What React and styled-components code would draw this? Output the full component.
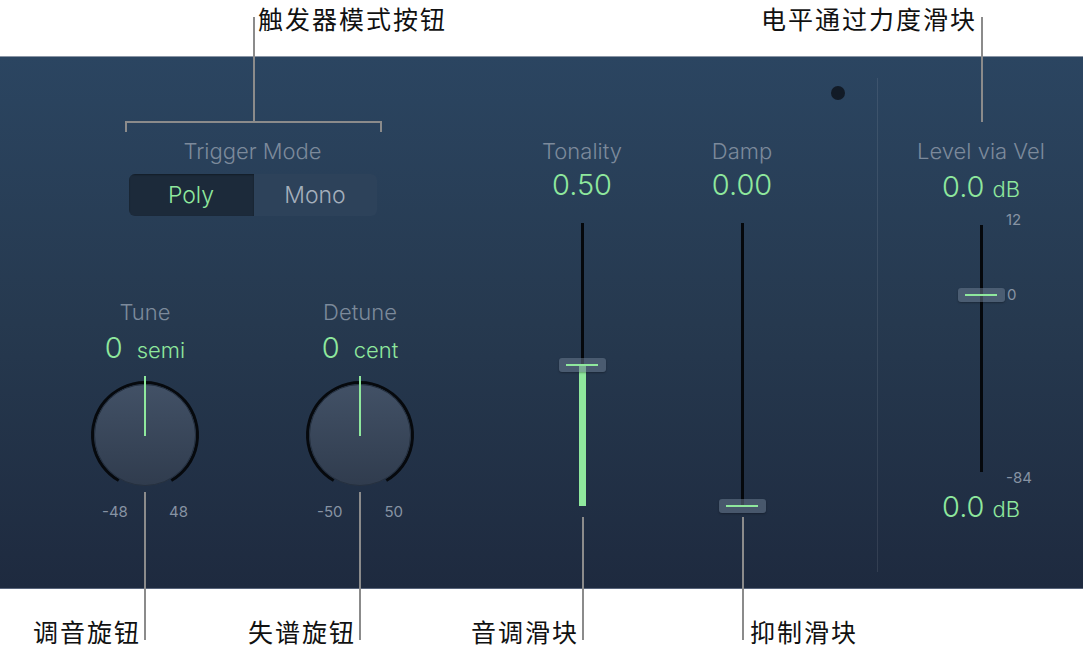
import styled, { createGlobalStyle } from "styled-components";

const GlobalStyle = createGlobalStyle`
  html, body {
    margin: 0;
    padding: 0;
    background: #ffffff;
  }
  body {
    font-family: Inter, "Noto Sans", sans-serif;
  }
`;

const GREEN = "#8fe89d";
const LABEL = "#7c8a9b";

const Page = styled.div`
  position: relative;
  width: 1083px;
  height: 654px;
  display: flex;
  flex-direction: column;
  overflow: hidden;
  background: #fff;
`;

const Strip = styled.div`
  height: ${(p) => p.$h}px;
  flex: none;
`;

const Panel = styled.div`
  height: 533px;
  box-sizing: border-box;
  flex: none;
  display: flex;
  align-items: flex-start;
  border-top: 1px solid #8a95a5;
  border-bottom: 1px solid #58647a;
  background: linear-gradient(180deg, #2b4561 0%, #26394f 50%, #1e2a3f 100%);
`;

const LeftGroup = styled.div`
  width: 365px;
  margin-left: 70px;
  padding-top: 81px;
  display: flex;
  flex-direction: column;
  align-items: center;
`;

const Label = styled.div`
  font-size: 22px;
  font-weight: 300;
  line-height: 26px;
  color: ${LABEL};
  white-space: nowrap;
  text-align: center;
`;

const Segmented = styled.div`
  margin-top: 10px;
  display: flex;
  height: 42px;
  border-radius: 6px;
  background: #2d425a;
  overflow: hidden;
`;

const Segment = styled.div`
  width: ${(p) => p.$w}px;
  display: flex;
  align-items: center;
  justify-content: center;
  font-size: 23px;
  font-weight: 300;
  color: ${(p) => (p.$active ? GREEN : "#a4afbc")};
  background: ${(p) => (p.$active ? "#1c2a3a" : "transparent")};
  box-shadow: ${(p) => (p.$active ? "inset 0 1px 2px rgba(0,0,0,0.35)" : "none")};
`;

const KnobRow = styled.div`
  margin-top: 83px;
  display: flex;
  gap: 65px;
`;

const KnobCol = styled.div`
  width: 150px;
  display: flex;
  flex-direction: column;
  align-items: center;
`;

const Value = styled.div`
  margin-top: ${(p) => p.$mt ?? 6}px;
  font-size: 29px;
  font-weight: 300;
  line-height: 34px;
  color: ${GREEN};
  white-space: nowrap;
  text-align: center;
`;

const Unit = styled.span`
  font-size: 22px;
  margin-left: ${(p) => p.$gap}px;
`;

const KnobSvg = styled.svg`
  margin-top: 7px;
  display: block;
`;

const Scale = styled.div`
  margin-top: 11px;
  width: 86px;
  display: flex;
  justify-content: space-between;
  font-size: 15px;
  line-height: 18px;
  color: #8793a3;
`;

const SliderCol = styled.div`
  width: 120px;
  margin-left: ${(p) => p.$ml}px;
  padding-top: 81px;
  display: flex;
  flex-direction: column;
  align-items: center;
`;

const TrackArea = styled.div`
  position: relative;
  margin-top: ${(p) => p.$mt}px;
  width: 60px;
  height: ${(p) => p.$h}px;
`;

const Track = styled.div`
  position: absolute;
  left: 50%;
  top: 0;
  width: 3px;
  margin-left: -1.5px;
  height: ${(p) => p.$h}px;
  background: #05080c;
`;

const Fill = styled.div`
  position: absolute;
  left: 50%;
  width: 7px;
  margin-left: -3.5px;
  background: ${GREEN};
`;

const Handle = styled.div`
  position: absolute;
  left: 50%;
  width: 47px;
  height: 14px;
  margin-left: -23.5px;
  border-radius: 3px;
  background: rgba(105, 122, 142, 0.55);
  box-shadow: 0 1px 2px rgba(0, 0, 0, 0.3);
  display: flex;
  align-items: center;
  justify-content: center;

  &::after {
    content: "";
    width: 32px;
    height: 2px;
    background: ${GREEN};
  }
`;

const Tick = styled.div`
  position: absolute;
  left: 55px;
  font-size: 15px;
  line-height: 16px;
  color: #8793a3;
  white-space: nowrap;
`;

const DotCol = styled.div`
  margin-left: 29px;
  padding-top: 29px;
`;

const Dot = styled.div`
  width: 14px;
  height: 14px;
  border-radius: 50%;
  background: #121b27;
`;

const Divider = styled.div`
  align-self: stretch;
  width: 1px;
  margin: 21px 0 16px 32px;
  background: rgba(255, 255, 255, 0.09);
`;

const LevelCol = styled.div`
  width: 140px;
  margin-left: 33px;
  padding-top: 81px;
  display: flex;
  flex-direction: column;
  align-items: center;
`;

/* annotation layer */
const Leader = styled.div`
  position: absolute;
  left: ${(p) => p.$x - 1}px;
  top: ${(p) => p.$y}px;
  width: ${(p) => p.$w ?? 2}px;
  height: ${(p) => p.$h}px;
  background: #8b8b8b;
`;

const Note = styled.div`
  position: absolute;
  top: ${(p) => p.$y}px;
  ${(p) => (p.$left != null ? `left: ${p.$left}px;` : `right: ${1083 - p.$right}px;`)}
  font-family: "Noto Sans CJK SC", sans-serif;
  font-size: 25px;
  line-height: 37px;
  letter-spacing: 2px;
  color: #111;
  white-space: nowrap;
`;

const Knob = () => (
  <KnobSvg width="120" height="118" viewBox="0 0 120 118">
    <defs>
      <linearGradient id="knobFill" x1="0" y1="0" x2="0" y2="1">
        <stop offset="0" stopColor="#425166" />
        <stop offset="1" stopColor="#303c4e" />
      </linearGradient>
    </defs>
    <path
      d="M 33.7 106.5 A 52.5 52.5 0 1 1 86.3 106.5"
      fill="none"
      stroke="#06090d"
      strokeWidth="3"
    />
    <circle cx="60" cy="61" r="50.5" fill="url(#knobFill)" stroke="#25303f" strokeWidth="1" />
    <line x1="60" y1="2" x2="60" y2="62" stroke={GREEN} strokeWidth="2" />
  </KnobSvg>
);

const KnobControl = ({ name, value, unit, min, max }) => (
  <KnobCol>
    <Label>{name}</Label>
    <Value>
      {value}
      <Unit $gap={14}>{unit}</Unit>
    </Value>
    <Knob />
    <Scale>
      <span>{min}</span>
      <span>{max}</span>
    </Scale>
  </KnobCol>
);

const TRACK = 283;

const VSlider = ({ name, value, ml, fill }) => {
  const pos = Math.round((1 - value) * TRACK);
  return (
    <SliderCol $ml={ml}>
      <Label>{name}</Label>
      <Value $mt={4}>{value.toFixed(2)}</Value>
      <TrackArea $mt={21} $h={290}>
        <Track $h={fill ? pos : TRACK} />
        {fill && <Fill style={{ top: pos, height: TRACK - pos }} />}
        <Handle style={{ top: pos - 7 }} />
      </TrackArea>
    </SliderCol>
  );
};

export default function App() {
  return (
    <>
      <GlobalStyle />
      <Page>
        <Strip $h={56} />
        <Panel>
          <LeftGroup>
            <Label>Trigger Mode</Label>
            <Segmented>
              <Segment $w={125} $active>
                Poly
              </Segment>
              <Segment $w={123}>Mono</Segment>
            </Segmented>
            <KnobRow>
              <KnobControl name="Tune" value="0" unit="semi" min="-48" max="48" />
              <KnobControl name="Detune" value="0" unit="cent" min="-50" max="50" />
            </KnobRow>
          </LeftGroup>

          <VSlider name="Tonality" value={0.5} ml={87} fill />
          <VSlider name="Damp" value={0} ml={40} />

          <DotCol>
            <Dot />
          </DotCol>
          <Divider />

          <LevelCol>
            <Label>Level via Vel</Label>
            <Value $mt={6}>
              0.0<Unit $gap={8}>dB</Unit>
            </Value>
            <TrackArea $mt={19} $h={247}>
              <Track $h={247} />
              <Handle style={{ top: 63 }} />
              <Tick style={{ top: -13 }}>12</Tick>
              <Tick style={{ top: 62, left: 56 }}>0</Tick>
              <Tick style={{ top: 245 }}>-84</Tick>
            </TrackArea>
            <Value $mt={18}>
              0.0<Unit $gap={8}>dB</Unit>
            </Value>
          </LevelCol>
        </Panel>
        <Strip $h={65} />

        {/* callouts */}
        <Leader $x={254} $y={17} $h={106} />
        <Leader $x={126} $y={121} $w={256} $h={2} />
        <Leader $x={126} $y={121} $h={11} />
        <Leader $x={381} $y={121} $h={11} />
        <Note $left={258} $y={0}>触发器模式按钮</Note>

        <Leader $x={982} $y={17} $h={105} />
        <Note $right={977} $y={0}>电平通过力度滑块</Note>

        <Leader $x={145} $y={492} $h={148} />
        <Note $right={141} $y={613}>调音旋钮</Note>
        <Leader $x={360} $y={492} $h={148} />
        <Note $right={356} $y={613}>失谱旋钮</Note>
        <Leader $x={583} $y={517} $h={123} />
        <Note $right={579} $y={613}>音调滑块</Note>
        <Leader $x={743} $y={517} $h={123} />
        <Note $left={750} $y={613}>抑制滑块</Note>
      </Page>
    </>
  );
}
